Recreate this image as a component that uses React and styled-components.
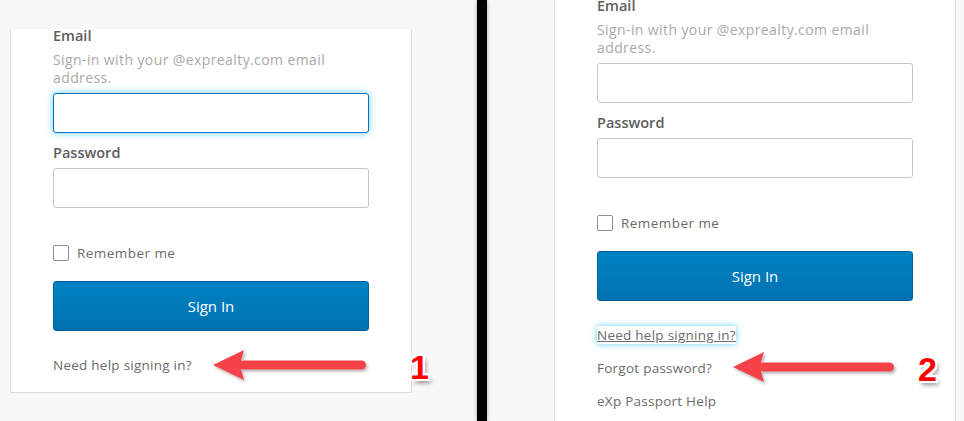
import React from "react";
import styled, { createGlobalStyle } from "styled-components";

const GlobalStyle = createGlobalStyle`
    html, body {
        margin: 0;
        padding: 0;
        background: #f8f8f8;
        overflow: hidden;
    }
    body {
        font-family: "Open Sans", "Liberation Sans", sans-serif;
    }
`;

function Arrow({ width }) {
    const h = 30;
    const mid = h / 2;
    return (
        <svg width={width + 6} height={h + 6} viewBox={`0 0 ${width + 6} ${h + 6}`}>
            <defs>
                <filter id={`shadow-${width}`} x="-10%" y="-30%" width="130%" height="180%">
                    <feDropShadow dx="1.5" dy="2" stdDeviation="1.5" floodColor="#000" floodOpacity="0.3" />
                </filter>
            </defs>
            <g filter={`url(#shadow-${width})`} fill="#f5424a" stroke="none">
                <polygon points={`0,${mid} 31,0 28,${mid - 4.5} 28,${mid + 4.5} 31,${h}`} />
                <rect x="26" y={mid - 4.5} width={width - 26} height="9" rx="4.5" />
            </g>
        </svg>
    );
}

export default function App() {
    return (
        <>
            <GlobalStyle />
            <Page>
                <Pane>
                    <Card $offset={29}>
                        <SignInForm emailFocused />
                        <Links>
                            <HelpLink>Need help signing in?</HelpLink>
                        </Links>
                    </Card>
                    <Callout $left={213} $top={350} $numberGap={38}>
                        <Arrow width={153} />
                        <Number>1</Number>
                    </Callout>
                </Pane>
                <Divider />
                <Pane $cardLeft={67}>
                    <Card $offset={-1}>
                        <SignInForm />
                        <Links>
                            <HelpLink $focused>Need help signing in?</HelpLink>
                            <HelpLink>Forgot password?</HelpLink>
                            <HelpLink>eXp Passport Help</HelpLink>
                        </Links>
                    </Card>
                    <Callout $left={246} $top={352} $numberGap={18}>
                        <Arrow width={161} />
                        <Number>2</Number>
                    </Callout>
                </Pane>
            </Page>
        </>
    );
}

function SignInForm({ emailFocused }) {
    return (
        <Form>
            <Label>Email</Label>
            <Hint>Sign-in with your @exprealty.com email address.</Hint>
            <Input $focused={emailFocused} />
            <Label $spaced>Password</Label>
            <Input type="password" />
            <CheckRow>
                <CheckBox />
                <span>Remember me</span>
            </CheckRow>
            <Button>Sign In</Button>
        </Form>
    );
}

const Page = styled.div`
    display: flex;
    width: 964px;
    height: 421px;
    background: #f8f8f8;
    overflow: hidden;
`;

const Pane = styled.div`
    position: relative;
    width: 477px;
    flex-shrink: 0;
    padding-left: ${props => props.$cardLeft || 10}px;
    box-sizing: border-box;
`;

const Divider = styled.div`
    width: 10px;
    flex-shrink: 0;
    background: #000;
    box-shadow: 0 0 4px rgba(0, 0, 0, 0.35);
    z-index: 1;
`;

const Card = styled.div`
    width: 402px;
    box-sizing: border-box;
    margin-top: ${props => props.$offset}px;
    padding: 0 42px 18px 42px;
    background: #fff;
    border: 1px solid #dcdcdc;
    border-top: none;
`;

const Form = styled.div`
    display: flex;
    flex-direction: column;
`;

const Label = styled.div`
    font-size: 14.5px;
    font-weight: 600;
    line-height: 14px;
    color: #5d5d5d;
    margin-top: ${props => props.$spaced ? "11px" : "0"};
    height: ${props => props.$spaced ? "18px" : "14px"};
    display: flex;
    align-items: center;
`;

const Hint = styled.div`
    margin-top: 8px;
    font-size: 14px;
    line-height: 18px;
    letter-spacing: 0.4px;
    color: #a9a9a9;
`;

const Input = styled.input`
    margin-top: 6px;
    height: 40px;
    width: 316px;
    box-sizing: border-box;
    border: 1px solid ${props => props.$focused ? "#0074c0" : "#c6c6c6"};
    border-radius: 3px;
    outline: none;
    box-shadow: ${props => props.$focused ? "0 0 7px rgba(81, 203, 238, 0.9)" : "none"};
    background: #fff;
`;

const CheckRow = styled.label`
    display: flex;
    align-items: center;
    gap: 8px;
    margin-top: 36px;
    height: 18px;
    font-size: 13.5px;
    letter-spacing: 0.45px;
    color: #6b6b6b;
`;

const CheckBox = styled.span`
    width: 16px;
    height: 16px;
    box-sizing: border-box;
    border: 1px solid #8e8e8e;
    border-radius: 2px;
    background: #fff;
`;

const Button = styled.button`
    margin-top: 19px;
    height: 50px;
    width: 316px;
    border: 1px solid #00609a;
    border-radius: 3px;
    background: linear-gradient(#0082c3, #0072b1);
    color: #fff;
    font-family: inherit;
    font-size: 15px;
    font-weight: 500;
    cursor: pointer;
`;

const Links = styled.div`
    display: flex;
    flex-direction: column;
    align-items: flex-start;
    gap: 15px;
    margin-top: 25px;
`;

const HelpLink = styled.a`
    font-size: 13.5px;
    line-height: 18px;
    letter-spacing: 0.25px;
    color: #6b6b6b;
    text-decoration: ${props => props.$focused ? "underline" : "none"};
    background: ${props => props.$focused ? "#fff" : "transparent"};
    box-shadow: ${props => props.$focused ? "0 0 6px rgba(81, 203, 238, 0.9)" : "none"};
    cursor: pointer;
`;

const Callout = styled.div`
    position: absolute;
    left: ${props => props.$left}px;
    top: ${props => props.$top}px;
    display: flex;
    align-items: center;
    gap: ${props => props.$numberGap}px;
`;

const Number = styled.span`
    font-family: "Liberation Sans", Arial, sans-serif;
    font-weight: 700;
    font-size: 34px;
    line-height: 34px;
    color: #ff0000;
    margin-top: -2px;
    text-shadow:
        -2px 0 0 #fff, 2px 0 0 #fff, 0 -2px 0 #fff, 0 2px 0 #fff,
        -2px -2px 0 #fff, 2px 2px 0 #fff, -2px 2px 0 #fff, 2px -2px 0 #fff,
        3px 4px 4px rgba(0, 0, 0, 0.45);
`;
